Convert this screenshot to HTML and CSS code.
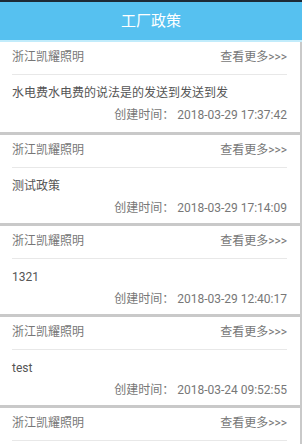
FILE: index.html
```html
<!DOCTYPE html>
<html lang="zh-CN">
<head>
    <meta charset="UTF-8">
    <meta name="viewport" content="width=device-width, initial-scale=1.0">
    <title>工厂政策</title>
    <link rel="stylesheet" href="styles.css">
</head>
<body>
    <div class="top-bar">工厂政策</div>
    <div class="list">
        <div class="card first">
            <div class="card-head">
                <span class="factory">浙江凯耀照明</span>
                <span class="more">查看更多&gt;&gt;&gt;</span>
            </div>
            <div class="card-title">水电费水电费的说法是的发送到发送到发</div>
            <div class="card-time">创建时间： 2018-03-29 17:37:42</div>
        </div>
        <div class="card">
            <div class="card-head">
                <span class="factory">浙江凯耀照明</span>
                <span class="more">查看更多&gt;&gt;&gt;</span>
            </div>
            <div class="card-title">测试政策</div>
            <div class="card-time">创建时间： 2018-03-29 17:14:09</div>
        </div>
        <div class="card">
            <div class="card-head">
                <span class="factory">浙江凯耀照明</span>
                <span class="more">查看更多&gt;&gt;&gt;</span>
            </div>
            <div class="card-title">1321</div>
            <div class="card-time">创建时间： 2018-03-29 12:40:17</div>
        </div>
        <div class="card">
            <div class="card-head">
                <span class="factory">浙江凯耀照明</span>
                <span class="more">查看更多&gt;&gt;&gt;</span>
            </div>
            <div class="card-title">test</div>
            <div class="card-time">创建时间： 2018-03-24 09:52:55</div>
        </div>
        <div class="card last">
            <div class="card-head">
                <span class="factory">浙江凯耀照明</span>
                <span class="more">查看更多&gt;&gt;&gt;</span>
            </div>
        </div>
    </div>
</body>
</html>
```

FILE: styles.css
```css
html, body {
    margin: 0;
    padding: 0;
    height: 100%;
    overflow: hidden;
}
body {
    font-family: Roboto, "Noto Sans CJK SC", sans-serif;
    font-size: 12px;
    color: #777;
    background: #fff;
}
.top-bar {
    height: 38px;
    line-height: 38px;
    border-top: 2px solid #1d2a36;
    border-bottom: 2px solid #c2ecfb;
    background-color: #56c1f0;
    color: #fff;
    font-size: 15px;
    text-align: center;
}
.list {
    border-right: 2px solid #c9c9c9;
}
.card {
    padding: 0 13px 5px 12px;
    border-bottom: 3px solid #c9c9c9;
}
.card.first {
    padding-bottom: 7px;
}
.card.last {
    border-bottom: none;
}
.card-head {
    display: flex;
    justify-content: space-between;
    height: 32px;
    line-height: 30px;
    border-bottom: 1px solid #e8e8e8;
}
.factory, .more {
    color: #777;
}
.card-title {
    padding-top: 8px;
    line-height: 20px;
    color: #555;
}
.card-time {
    margin-top: 2px;
    line-height: 20px;
    text-align: right;
    color: #777;
}
```
